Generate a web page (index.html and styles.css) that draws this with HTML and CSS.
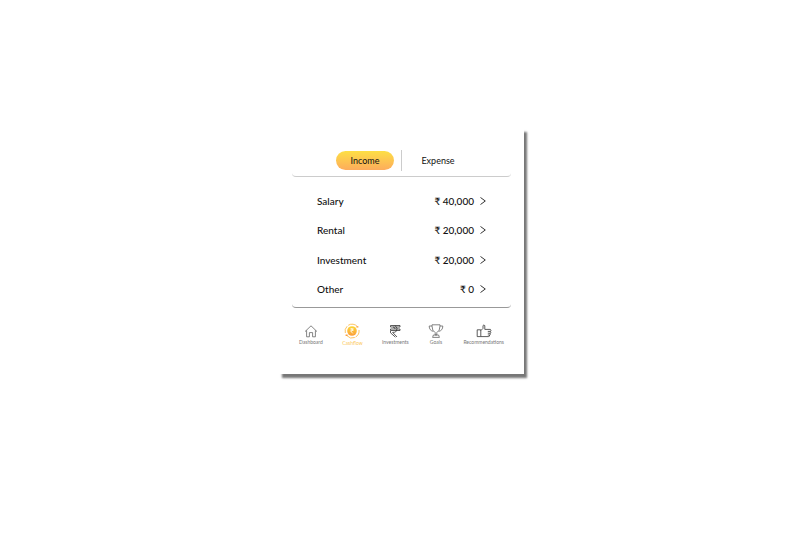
FILE: index.html
```html
<!DOCTYPE html>
<html lang="en">
<head>
    <meta charset="UTF-8">
    <meta name="viewport" content="width=device-width, initial-scale=1.0">
    <title>Cashflow</title>
    <link rel="stylesheet" href="styles.css">
</head>
<body>
    <main class="card">
        <div class="tabs">
            <button class="tab active" type="button">Income</button>
            <span class="divider"></span>
            <button class="tab" type="button">Expense</button>
        </div>

        <ul class="list">
            <li><a class="row" href="#salary"><span class="name">Salary</span><span class="amount">₹ 40,000</span><svg class="chevron" viewBox="0 0 6 10"><path d="M0.5 1.5L5.3 5L0.5 8.5"/></svg></a></li>
            <li><a class="row" href="#rental"><span class="name">Rental</span><span class="amount">₹ 20,000</span><svg class="chevron" viewBox="0 0 6 10"><path d="M0.5 1.5L5.3 5L0.5 8.5"/></svg></a></li>
            <li><a class="row" href="#investment"><span class="name">Investment</span><span class="amount">₹ 20,000</span><svg class="chevron" viewBox="0 0 6 10"><path d="M0.5 1.5L5.3 5L0.5 8.5"/></svg></a></li>
            <li><a class="row" href="#other"><span class="name">Other</span><span class="amount">₹ 0</span><svg class="chevron" viewBox="0 0 6 10"><path d="M0.5 1.5L5.3 5L0.5 8.5"/></svg></a></li>
        </ul>

        <nav class="nav">
            <a class="nav-item" href="#dashboard">
                <svg class="icon" viewBox="0 0 16 16">
                    <path d="M2 8.6L8 2.8L14 8.6M3.6 7.4V13.8H6.4V9.6H9.6V13.8H12.4V7.4"/>
                </svg>
                Dashboard
            </a>
            <a class="nav-item current" href="#cashflow">
                <svg class="icon" viewBox="0 0 16 16">
                    <defs>
                        <linearGradient id="gold" x1="0" y1="0" x2="0" y2="1">
                            <stop offset="0" stop-color="#fdd835"/>
                            <stop offset="1" stop-color="#fb9d3c"/>
                        </linearGradient>
                    </defs>
                    <circle cx="8" cy="8" r="4.8" fill="url(#gold)" stroke="none"/>
                    <path class="gold-ring" d="M4.2 2.3A7 7 0 0 1 13.4 3.6M15 7A7 7 0 0 1 11.6 14M10.8 14.5A7 7 0 0 1 2.8 12.6M1.3 10A7 7 0 0 1 3.2 3.2"/>
                    <path class="gold-dots" d="M13.4 3.2V4.6M2.6 11.6V13"/>
                    <path class="coin-mark" d="M6.4 5.8H9.6M6.4 7.2H9.6M7 5.8Q9.4 6.2 8.6 7.4Q8 8.2 6.8 8.2L8.8 10.4"/>
                </svg>
                Cashflow
            </a>
            <a class="nav-item" href="#investments">
                <svg class="icon" viewBox="0 0 16 16">
                    <path class="strong" d="M3.5 2.5H13V4H3.5ZM3.5 6H13V7.5H3.5ZM8 2.5Q11.4 5 9.4 8.2Q8 9.6 5.6 9.4L10 14M3.5 8V9.8L8.4 14.2M6 4Q8.6 4.6 8 6"/>
                </svg>
                Investments
            </a>
            <a class="nav-item" href="#goals">
                <svg class="icon" viewBox="0 0 16 16">
                    <path d="M4 1.8H12V3Q12 8 8.8 9.6V12H7.2V9.6Q4 8 4 3ZM4 3H1.2Q1.2 7.6 5.4 8.4M12 3H14.8Q14.8 7.6 10.6 8.4M5.4 12H10.6L11.4 14.4H4.6Z"/>
                </svg>
                Goals
            </a>
            <a class="nav-item" href="#recommendations">
                <svg class="icon" viewBox="0 0 16 16">
                    <path class="strong" d="M1.2 6.8H4.8V13.6H1.2ZM4.8 7.6L7 5.4V2.6Q7.8 1.4 8.8 2.6V6.4H14.4Q15.6 7.2 14.4 8.4Q15.4 9.4 14.2 10.2Q14.8 11.4 13.6 12Q13.8 13.6 12.4 13.6H4.8M11.8 8.4H14.4M11.8 10.2H14.2M11.8 12H13.6"/>
                </svg>
                Recommendations
            </a>
        </nav>
    </main>
</body>
</html>
```
FILE: styles.css
```css
* {
    box-sizing: border-box;
}
body {
    min-height: 100vh;
    margin: 0;
    padding: 128px 16px 0;
    font-family: Lato, "Noto Sans", sans-serif;
    background-color: #fff;
    color: #111;
}
a {
    color: inherit;
    text-decoration: none;
}
.card {
    max-width: 245px;
    margin: 0 auto;
    padding: 22px 13px 28px;
    background-color: #fff;
    box-shadow: 3px 4px 2px #777;
}
.tabs {
    display: flex;
    align-items: center;
    justify-content: center;
    gap: 7px;
    padding-bottom: 5px;
    border-bottom: 1px solid #ccc;
    border-radius: 0 0 4px 4px;
}
.tab {
    width: 58px;
    height: 19px;
    padding: 0;
    border: none;
    border-radius: 10px;
    background: none;
    color: #111;
    font-family: inherit;
    font-size: 9px;
    cursor: pointer;
}
.tab.active {
    background-image: linear-gradient(#fddf45, #fdac5c);
}
.divider {
    width: 1px;
    height: 21px;
    background-color: #ccc;
}
.list {
    display: grid;
    grid-template-rows: repeat(4, 1fr);
    min-height: 131px;
    margin: 0;
    padding: 9px 25px 3px;
    list-style: none;
    border-bottom: 1px solid #999;
    border-radius: 0 0 4px 4px;
}
.row {
    display: flex;
    align-items: center;
    height: 100%;
    font-size: 10px;
    font-weight: 500;
}
.name {
    flex: 1;
}
.chevron {
    width: 6px;
    height: 10px;
    margin-left: 6px;
    fill: none;
    stroke: #333;
    stroke-width: 1;
}
.nav {
    display: flex;
    justify-content: space-between;
    padding: 15px 7px 0;
}
.nav-item {
    display: flex;
    flex-direction: column;
    align-items: center;
    color: #777;
    font-size: 5px;
    line-height: 6px;
}
.nav-item.current {
    gap: 1px;
    color: #fbc95c;
}
.icon {
    width: 16px;
    height: 16px;
    fill: none;
    stroke: #666;
    stroke-width: 0.8;
}
.strong {
    stroke: #333;
}
.gold-ring {
    stroke: #fbb53c;
}
.gold-dots {
    stroke: #fb9d3c;
    stroke-width: 2;
}
.coin-mark {
    stroke: #fff;
}
```
